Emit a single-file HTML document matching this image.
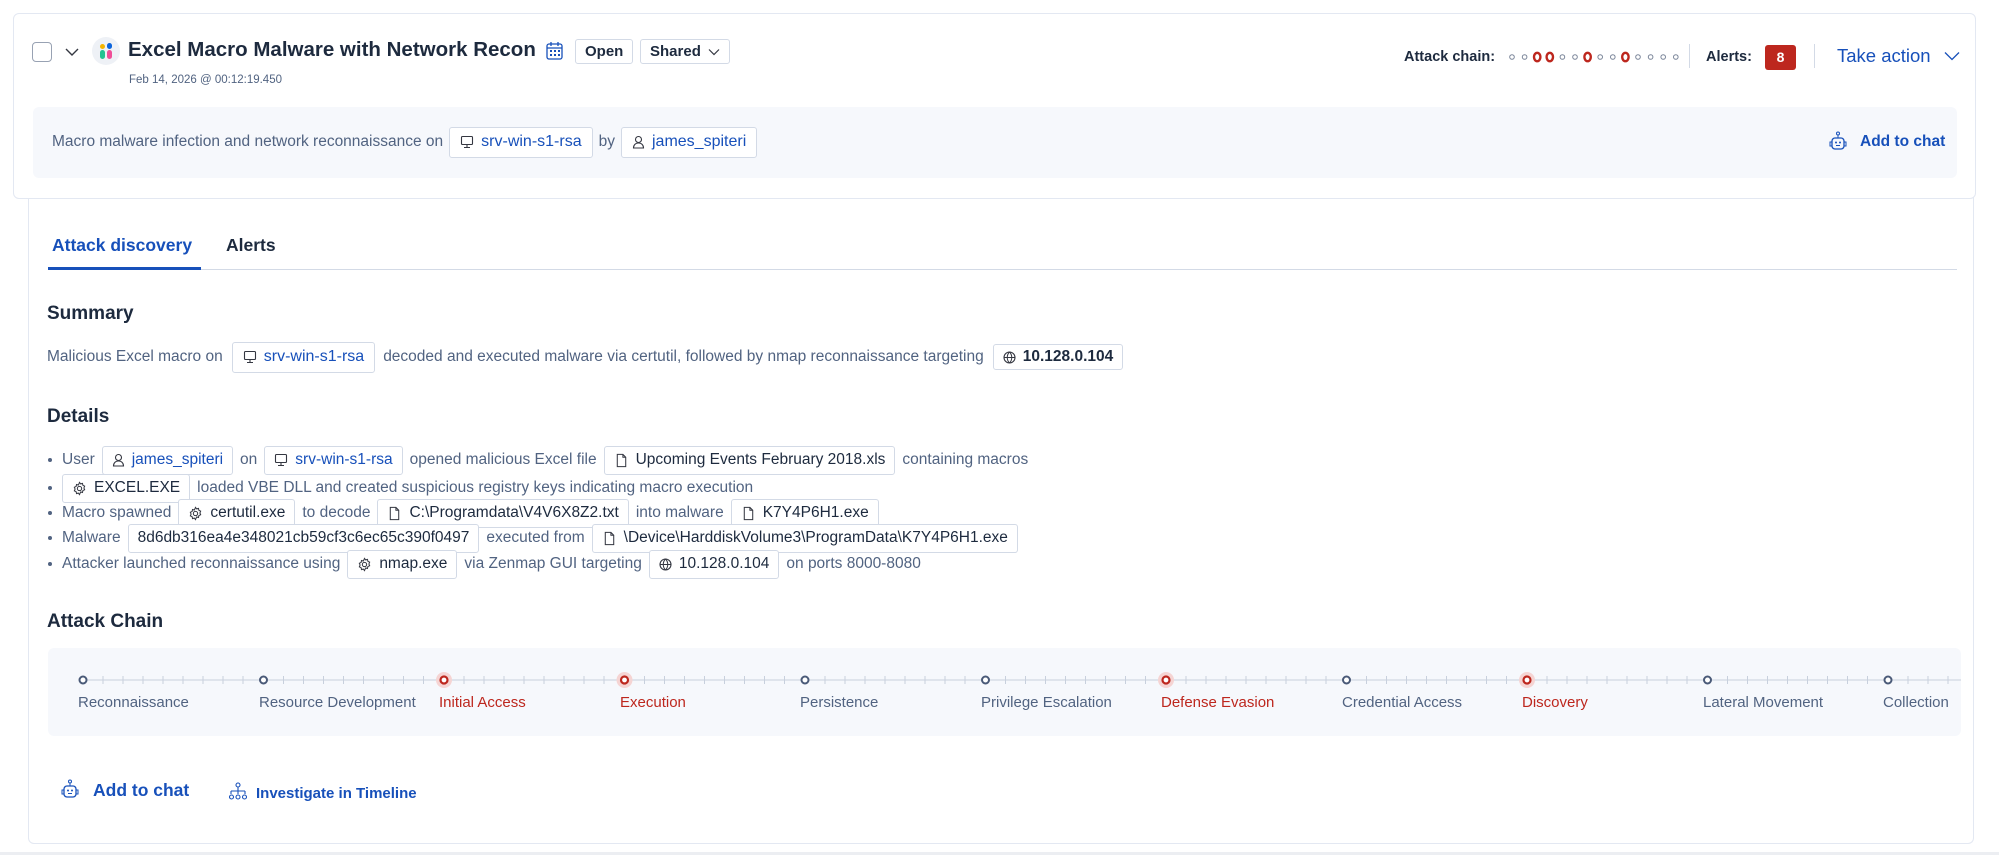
<!DOCTYPE html>
<html><head><meta charset="utf-8"><style>
*{box-sizing:border-box;margin:0;padding:0}
body{width:1999px;height:855px;background:#fff;font-family:"Liberation Sans",sans-serif;color:#1d2a3e;position:relative;overflow:hidden}
.abs{position:absolute;white-space:nowrap}
.card1{left:13px;top:13px;width:1963px;height:186px;border:1px solid #e3e8f2;border-radius:6px;background:#fff;z-index:2}
.card2{left:28px;top:195px;width:1946px;height:649px;border:1px solid #e3e8f2;border-top:none;border-radius:0 0 6px 6px;background:#fff}
.chip{display:inline-flex;align-items:center;gap:7px;border:1px solid #d3dae6;border-radius:3px;background:#fff;padding:0 9px;height:29px;color:#1d2a3e;font-size:15.5px;vertical-align:middle;white-space:nowrap}
.chip.blue{color:#1750ba}
.chip.big{height:31px;padding:0 10px;font-size:16px}
.row{display:flex;align-items:center;font-size:15.5px;color:#516381;white-space:nowrap}
.li{position:absolute;left:48px;display:flex;align-items:center;font-size:15.5px;color:#516381;white-space:nowrap}
.li:before{content:"";width:4px;height:4px;border-radius:50%;background:#516381;margin-right:10px}
.li .chip{margin:0 7px}
h3{font-size:19px;font-weight:bold;color:#1d2a3e;position:absolute;left:47px;white-space:nowrap}
.lbl{position:absolute;top:694px;font-size:15px;color:#516381;white-space:nowrap}
.red{color:#bd271e}
</style></head><body>
<svg width="0" height="0" style="position:absolute"><defs>
<symbol id="gear" viewBox="0 0 16 16"><g fill="none" stroke="#343741" stroke-width="1.1"><circle cx="8" cy="8" r="2.3"/><path d="M8 1.5l1.2 1.6 2-.5.4 2 1.9.9-.8 1.9.8 1.9-1.9.9-.4 2-2-.5L8 14.5l-1.2-1.6-2 .5-.4-2-1.9-.9.8-1.9-.8-1.9 1.9-.9.4-2 2 .5z"/></g></symbol>
<symbol id="doc" viewBox="0 0 16 16"><path d="M3.5 1.5h6l3 3v10h-9z M9.5 1.5v3h3" fill="none" stroke="#343741" stroke-width="1.1"/></symbol>
<symbol id="glob" viewBox="0 0 13 13"><circle cx="6.5" cy="6.5" r="5.5" fill="none" stroke="#343741" stroke-width="1.1"/><path d="M1 6.5h11M6.5 1c-3 3-3 8 0 11M6.5 1c3 3 3 8 0 11" fill="none" stroke="#343741" stroke-width="1"/></symbol>
<symbol id="host" viewBox="0 0 14 14"><rect x="1.5" y="1.5" width="11" height="8" rx="1" fill="none" stroke="#343741" stroke-width="1.1"/><path d="M7 9.5v3M4 12.5h6" stroke="#343741" stroke-width="1.1"/></symbol>
<symbol id="user" viewBox="0 0 13 14"><circle cx="6.5" cy="4.5" r="3" fill="none" stroke="#343741" stroke-width="1.1"/><path d="M1.5 13c0-3 2-5 5-5s5 2 5 5z" fill="none" stroke="#343741" stroke-width="1.1"/></symbol>
</defs></svg>
<div class="abs card1"></div>
<div class="abs" style="left:0;top:0;z-index:3">
  <div class="abs" style="left:32px;top:42px;width:20px;height:20px;border:1.5px solid #98a2b3;border-radius:4px"></div>
  <svg class="abs" style="left:64px;top:46px" width="16" height="12" viewBox="0 0 16 12"><path d="M2 3l6 6 6-6" fill="none" stroke="#343741" stroke-width="1.4"/></svg>
  <div class="abs" style="left:92px;top:37px;width:28px;height:28px;border-radius:50%;background:#eef1f6"></div>
  <div class="abs" style="left:100px;top:44px;width:5px;height:5px;border-radius:50%;background:#f4b400"></div>
  <div class="abs" style="left:107px;top:43px;width:5px;height:6px;border-radius:3px;background:#0b64dd"></div>
  <div class="abs" style="left:100px;top:50px;width:5px;height:9px;border-radius:3px;background:#24c292"></div>
  <div class="abs" style="left:107px;top:50px;width:5px;height:9px;border-radius:3px;background:#f04e98"></div>
  <div class="abs" style="left:128px;top:38px;font-size:20.5px;font-weight:bold">Excel Macro Malware with Network Recon</div>
  <svg class="abs" style="left:546px;top:41px" width="17" height="19" viewBox="0 0 17 19"><rect x="1" y="3" width="15" height="15" rx="2" fill="none" stroke="#1750ba" stroke-width="1.3"/><path d="M1 7h15M5 1v4M12 1v4" stroke="#1750ba" stroke-width="1.3"/><g fill="#1750ba"><rect x="4" y="9" width="2" height="2"/><rect x="8" y="9" width="2" height="2"/><rect x="12" y="9" width="2" height="2"/><rect x="4" y="13" width="2" height="2"/><rect x="8" y="13" width="2" height="2"/><rect x="12" y="13" width="2" height="2"/></g></svg>
  <div class="abs chip" style="left:575px;top:39px;height:25px;font-size:15px;padding:0 9px;font-weight:bold">Open</div>
  <div class="abs chip" style="left:640px;top:39px;height:25px;font-size:15px;padding:0 9px;font-weight:bold">Shared <svg width="12" height="8" viewBox="0 0 12 8"><path d="M1 1.5l5 5 5-5" fill="none" stroke="#343741" stroke-width="1.2"/></svg></div>
  <div class="abs" style="left:129px;top:74px;font-size:11.5px;color:#516381">Feb 14, 2026 @ 00:12:19.450</div>

  <div class="abs" style="left:1404px;top:49px;font-size:14.5px;font-weight:bold">Attack chain:</div>
  <svg class="abs" style="left:1508px;top:50px" width="176" height="14" viewBox="0 0 176 14" id="mini"></svg>
  <div class="abs" style="left:1689px;top:44px;width:1px;height:24px;background:#d3dae6"></div>
  <div class="abs" style="left:1706px;top:49px;font-size:14.5px;font-weight:bold">Alerts:</div>
  <div class="abs" style="left:1765px;top:45px;width:31px;height:25px;background:#bd271e;border-radius:3px;color:#fff;font-size:14px;font-weight:bold;text-align:center;line-height:25px">8</div>
  <div class="abs" style="left:1814px;top:44px;width:1px;height:24px;background:#d3dae6"></div>
  <div class="abs" style="left:1837px;top:45px;font-size:18.5px;color:#1750ba">Take action</div>
  <svg class="abs" style="left:1944px;top:51px" width="16" height="10" viewBox="0 0 16 10"><path d="M1 1.5l7 7 7-7" fill="none" stroke="#1750ba" stroke-width="1.3"/></svg>

  <div class="abs" style="left:33px;top:107px;width:1924px;height:71px;background:#f6f8fc;border-radius:6px"></div>
  <div class="abs row" style="left:52px;top:126px;height:32px;font-size:15.5px">Macro malware infection and network reconnaissance on
    <span class="chip blue big" style="margin:0 6px 0 6px"><svg width="14" height="14"><use href="#host"/></svg>srv-win-s1-rsa</span>by
    <span class="chip blue big" style="margin-left:6px"><svg width="13" height="14"><use href="#user"/></svg>james_spiteri</span>
  </div>
  <svg class="abs" style="left:1829px;top:131px" width="18" height="22" viewBox="0 0 18 22"><circle cx="9" cy="2.5" r="1.5" fill="none" stroke="#1750ba"/><path d="M9 4v3" stroke="#1750ba"/><rect x="3" y="7" width="12" height="11" rx="3" fill="none" stroke="#1750ba" stroke-width="1.3"/><path d="M3 11H1v4h2M15 11h2v4h-2" fill="none" stroke="#1750ba"/><circle cx="7" cy="11.5" r="1" fill="#1750ba"/><circle cx="11" cy="11.5" r="1" fill="#1750ba"/><path d="M7 14.5h4" stroke="#1750ba"/></svg>
  <div class="abs" style="left:1860px;top:133px;font-size:15.5px;color:#1750ba;font-weight:bold">Add to chat</div>
</div>

<div class="abs card2"></div>
<div class="abs" style="left:0;top:0;z-index:3">
  <div class="abs" style="left:52px;top:235px;font-size:17.5px;font-weight:bold;color:#1750ba">Attack discovery</div>
  <div class="abs" style="left:226px;top:235px;font-size:17.5px;font-weight:bold;color:#1d2a3e">Alerts</div>
  <div class="abs" style="left:48px;top:269px;width:1909px;height:1px;background:#d3dae6"></div>
  <div class="abs" style="left:48px;top:267px;width:153px;height:3px;background:#1750ba"></div>

  <h3 style="top:303px">Summary</h3>
  <div class="abs row" style="left:47px;top:342px;height:30px">Malicious Excel macro on
    <span class="chip blue big" style="margin:0 8px 0 9px"><svg width="14" height="14"><use href="#host"/></svg>srv-win-s1-rsa</span>decoded and executed malware via certutil, followed by nmap reconnaissance targeting
    <span class="chip" style="margin-left:9px;height:26px;font-weight:bold;font-size:15.5px"><svg width="13" height="13"><use href="#glob"/></svg>10.128.0.104</span>
  </div>

  <h3 style="top:406px">Details</h3>
  <div class="li" style="top:445px;height:30px">User
    <span class="chip blue"><svg width="13" height="14"><use href="#user"/></svg>james_spiteri</span>on
    <span class="chip blue"><svg width="14" height="14"><use href="#host"/></svg>srv-win-s1-rsa</span>opened malicious Excel file
    <span class="chip"><svg width="15" height="15"><use href="#doc"/></svg>Upcoming Events February 2018.xls</span>containing macros</div>
  <div class="li" style="top:473px;height:30px"><span class="chip" style="margin-left:0"><svg width="15" height="15"><use href="#gear"/></svg>EXCEL.EXE</span>loaded VBE DLL and created suspicious registry keys indicating macro execution</div>
  <div class="li" style="top:498px;height:30px">Macro spawned<span class="chip"><svg width="15" height="15"><use href="#gear"/></svg>certutil.exe</span>to decode<span class="chip"><svg width="15" height="15"><use href="#doc"/></svg>C:\Programdata\V4V6X8Z2.txt</span>into malware<span class="chip"><svg width="15" height="15"><use href="#doc"/></svg>K7Y4P6H1.exe</span></div>
  <div class="li" style="top:523px;height:30px">Malware<span class="chip">8d6db316ea4e348021cb59cf3c6ec65c390f0497</span>executed from<span class="chip"><svg width="15" height="15"><use href="#doc"/></svg>\Device\HarddiskVolume3\ProgramData\K7Y4P6H1.exe</span></div>
  <div class="li" style="top:549px;height:30px">Attacker launched reconnaissance using<span class="chip"><svg width="15" height="15"><use href="#gear"/></svg>nmap.exe</span>via Zenmap GUI targeting<span class="chip"><svg width="13" height="13"><use href="#glob"/></svg>10.128.0.104</span>on ports 8000-8080</div>

  <h3 style="top:611px">Attack Chain</h3>
  <div class="abs" style="left:48px;top:648px;width:1913px;height:88px;background:#f6f8fc;border-radius:6px;overflow:hidden">
    <svg width="1913" height="88" style="position:absolute;left:0;top:0"><line x1="35" y1="32" x2="1913" y2="32" stroke="#c8d0dd" stroke-width="1"/></svg>
  </div>
  <svg class="abs" style="left:48px;top:648px" width="1913" height="88" id="tl"></svg>
  <div class="lbl" style="left:78px">Reconnaissance</div>
  <div class="lbl" style="left:259px">Resource Development</div>
  <div class="lbl red" style="left:439px">Initial Access</div>
  <div class="lbl red" style="left:620px">Execution</div>
  <div class="lbl" style="left:800px">Persistence</div>
  <div class="lbl" style="left:981px">Privilege Escalation</div>
  <div class="lbl red" style="left:1161px">Defense Evasion</div>
  <div class="lbl" style="left:1342px">Credential Access</div>
  <div class="lbl red" style="left:1522px">Discovery</div>
  <div class="lbl" style="left:1703px">Lateral Movement</div>
  <div class="lbl" style="left:1883px">Collection</div>

  <svg class="abs" style="left:61px;top:779px" width="18" height="22" viewBox="0 0 18 22"><circle cx="9" cy="2.5" r="1.5" fill="none" stroke="#1750ba"/><path d="M9 4v3" stroke="#1750ba"/><rect x="3" y="7" width="12" height="11" rx="3" fill="none" stroke="#1750ba" stroke-width="1.3"/><path d="M3 11H1v4h2M15 11h2v4h-2" fill="none" stroke="#1750ba"/><circle cx="7" cy="11.5" r="1" fill="#1750ba"/><circle cx="11" cy="11.5" r="1" fill="#1750ba"/><path d="M7 14.5h4" stroke="#1750ba"/></svg>
  <div class="abs" style="left:93px;top:780px;font-size:17.5px;color:#1750ba;font-weight:bold">Add to chat</div>
  <svg class="abs" style="left:229px;top:782px" width="18" height="20" viewBox="0 0 18 20"><g fill="none" stroke="#1750ba" stroke-width="1.1"><circle cx="9" cy="3" r="2"/><path d="M9 5v4M2 9h14M2 9v3M16 9v3M9 9v3"/><circle cx="2.5" cy="15" r="2"/><circle cx="9" cy="15" r="2"/><circle cx="15.5" cy="15" r="2"/></g></svg>
  <div class="abs" style="left:256px;top:785px;font-size:15px;color:#1750ba;font-weight:bold">Investigate in Timeline</div>
</div>
<div class="abs" style="left:0;top:852px;width:1999px;height:3px;background:#eceef2"></div>
<script>
var tl=document.getElementById('tl'),s='';
var red=[2,3,6,8];
for(var i=0;i<11;i++){var x=35+i*180.5;
 for(var k=1;k<9;k++){var tx=x+k*20;s+='<line x1="'+tx+'" y1="28" x2="'+tx+'" y2="36" stroke="#c8d0dd"/>';}
 if(red.indexOf(i)>=0){s+='<circle cx="'+x+'" cy="32" r="8" fill="#f5d4d3"/><circle cx="'+x+'" cy="32" r="3.5" fill="#fff" stroke="#bd271e" stroke-width="2.2"/>';}
 else s+='<circle cx="'+x+'" cy="32" r="3.5" fill="#fff" stroke="#4a5a78" stroke-width="2"/>';}
tl.innerHTML=s;
var m='',r2=[2,3,6,9];
for(var j=0;j<14;j++){var mx=4+j*12.6;
 if(r2.indexOf(j)>=0)m+='<ellipse cx="'+mx+'" cy="7" rx="3.2" ry="4.2" fill="none" stroke="#bd271e" stroke-width="2.4"/>';
 else m+='<circle cx="'+mx+'" cy="7" r="2.3" fill="none" stroke="#7a8599"/>';}
document.getElementById('mini').innerHTML=m;
</script>
</body></html>
